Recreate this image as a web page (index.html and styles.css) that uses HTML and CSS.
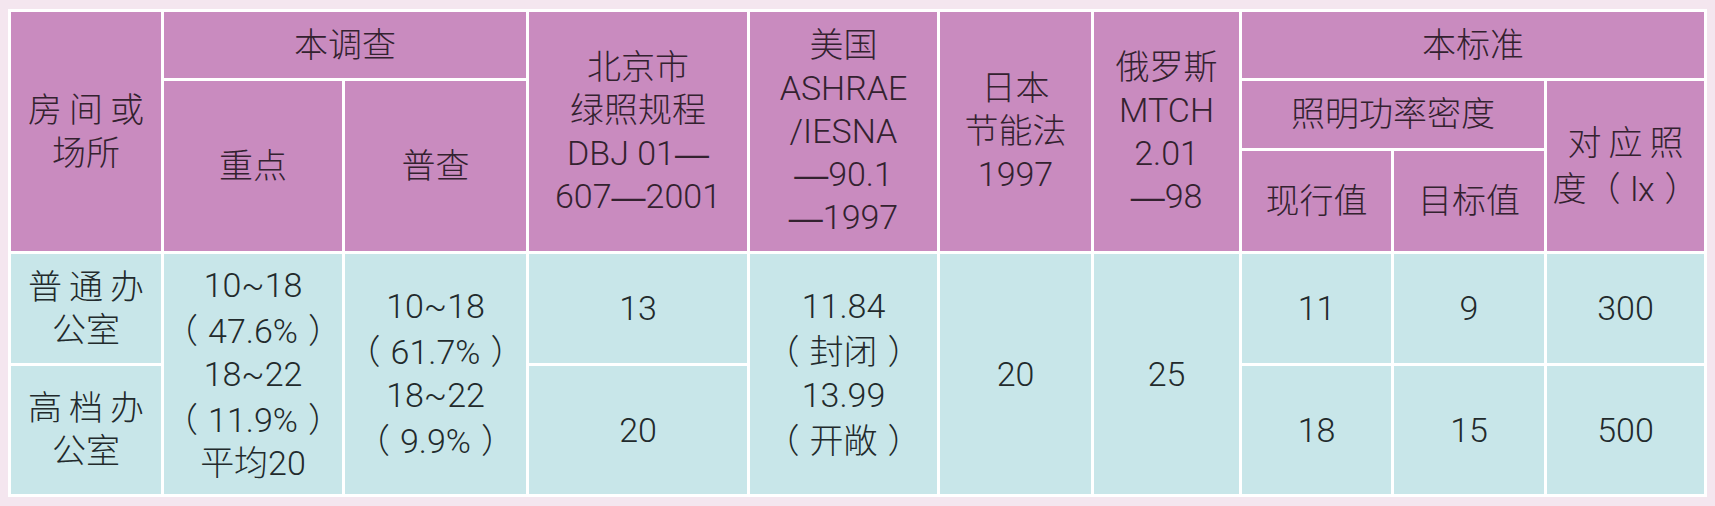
FILE: index.html
```html
<!DOCTYPE html>
<html lang="zh-CN">
<head>
<meta charset="utf-8">
<title>照明功率密度对比</title>
<link rel="stylesheet" href="styles.css">
</head>
<body>
<div class="table">
  <div class="cell hd room"><div class="txt"><span class="sp">房间或</span><br>场所</div></div>
  <div class="cell hd survey"><div class="txt">本调查</div></div>
  <div class="cell hd key"><div class="txt">重点</div></div>
  <div class="cell hd general"><div class="txt">普查</div></div>
  <div class="cell hd bj"><div class="txt">北京市<br>绿照规程<br>DBJ 01<span class="dash">—</span><br>607<span class="dash">—</span>2001</div></div>
  <div class="cell hd us"><div class="txt">美国<br>ASHRAE<br>/IESNA<br><span class="dash">—</span>90.1<br><span class="dash">—</span>1997</div></div>
  <div class="cell hd jp"><div class="txt">日本<br>节能法<br>1997</div></div>
  <div class="cell hd ru"><div class="txt">俄罗斯<br>MTCH<br>2.01<br><span class="dash">—</span>98</div></div>
  <div class="cell hd std"><div class="txt">本标准</div></div>
  <div class="cell hd lpd"><div class="txt">照明功率密度</div></div>
  <div class="cell hd lux"><div class="txt"><span class="sp">对应照</span><br>度<span class="po">（</span>lx<span class="pc">）</span></div></div>
  <div class="cell hd cur"><div class="txt">现行值</div></div>
  <div class="cell hd tgt"><div class="txt">目标值</div></div>

  <div class="cell bd r4 c1"><div class="txt"><span class="sp">普通办</span><br>公室</div></div>
  <div class="cell bd r5 c1"><div class="txt"><span class="sp">高档办</span><br>公室</div></div>
  <div class="cell bd rs c2"><div class="txt">10~18<br><span class="po">（</span>47.6%<span class="pc">）</span><br>18~22<br><span class="po">（</span>11.9%<span class="pc">）</span><br>平均20</div></div>
  <div class="cell bd rs c3"><div class="txt">10~18<br><span class="po">（</span>61.7%<span class="pc">）</span><br>18~22<br><span class="po">（</span>9.9%<span class="pc">）</span></div></div>
  <div class="cell bd r4 c4"><div class="txt">13</div></div>
  <div class="cell bd r5 c4"><div class="txt">20</div></div>
  <div class="cell bd rs c5"><div class="txt">11.84<br><span class="po">（</span>封闭<span class="pc">）</span><br>13.99<br><span class="po">（</span>开敞<span class="pc">）</span></div></div>
  <div class="cell bd rs c6"><div class="txt">20</div></div>
  <div class="cell bd rs c7"><div class="txt">25</div></div>
  <div class="cell bd r4 c8"><div class="txt">11</div></div>
  <div class="cell bd r4 c9"><div class="txt">9</div></div>
  <div class="cell bd r4 c10"><div class="txt">300</div></div>
  <div class="cell bd r5 c8"><div class="txt">18</div></div>
  <div class="cell bd r5 c9"><div class="txt">15</div></div>
  <div class="cell bd r5 c10"><div class="txt">500</div></div>
</div>
</body>
</html>
```
FILE: styles.css
```css
html, body {
  margin: 0;
  padding: 0;
  background: #f4e6ef;
}

body {
  font-family: Roboto, "Liberation Sans", "Noto Sans CJK SC", sans-serif;
  font-weight: 300;
  color: #2a2228;
}

.table {
  display: grid;
  grid-template-columns: 150px 178px 181px 218px 187px 151px 145px 149px 150px 157px;
  grid-template-rows: 66px 67px 100px 109px 128px;
  gap: 3px;
  padding: 3px;
  background: #ffffff;
  width: max-content;
  margin: 9px 0 0 8px;
}

.cell {
  display: flex;
  align-items: center;
  justify-content: center;
}

.txt {
  text-align: center;
  font-size: 34px;
  line-height: 43px;
  white-space: nowrap;
}

.hd { background: #c98bbf; color: #33222f; }
.bd { background: #c8e6e9; color: #222a2c; }

.sp { letter-spacing: 7px; padding-left: 7px; }

.dash { font-family: "Liberation Sans", sans-serif; font-weight: 400; }

.po { font-family: "Noto Sans CJK SC", sans-serif; margin-right: 10px; }
.pc { font-family: "Noto Sans CJK SC", sans-serif; margin-left: 10px; }

/* header placement */
.room    { grid-column: 1; grid-row: 1 / 4; }
.survey  { grid-column: 2 / 4; grid-row: 1; }
.key     { grid-column: 2; grid-row: 2 / 4; }
.general { grid-column: 3; grid-row: 2 / 4; }
.bj      { grid-column: 4; grid-row: 1 / 4; }
.us      { grid-column: 5; grid-row: 1 / 4; }
.jp      { grid-column: 6; grid-row: 1 / 4; }
.ru      { grid-column: 7; grid-row: 1 / 4; }
.std     { grid-column: 8 / 11; grid-row: 1; }
.lpd     { grid-column: 8 / 10; grid-row: 2; }
.lux     { grid-column: 10; grid-row: 2 / 4; }
.cur     { grid-column: 8; grid-row: 3; }
.tgt     { grid-column: 9; grid-row: 3; }

/* body placement */
.r4 { grid-row: 4; }
.r5 { grid-row: 5; }
.rs { grid-row: 4 / 6; }
.c1 { grid-column: 1; }
.c2 { grid-column: 2; }
.c3 { grid-column: 3; }
.c4 { grid-column: 4; }
.c5 { grid-column: 5; }
.c6 { grid-column: 6; }
.c7 { grid-column: 7; }
.c8 { grid-column: 8; }
.c9 { grid-column: 9; }
.c10 { grid-column: 10; }
```
